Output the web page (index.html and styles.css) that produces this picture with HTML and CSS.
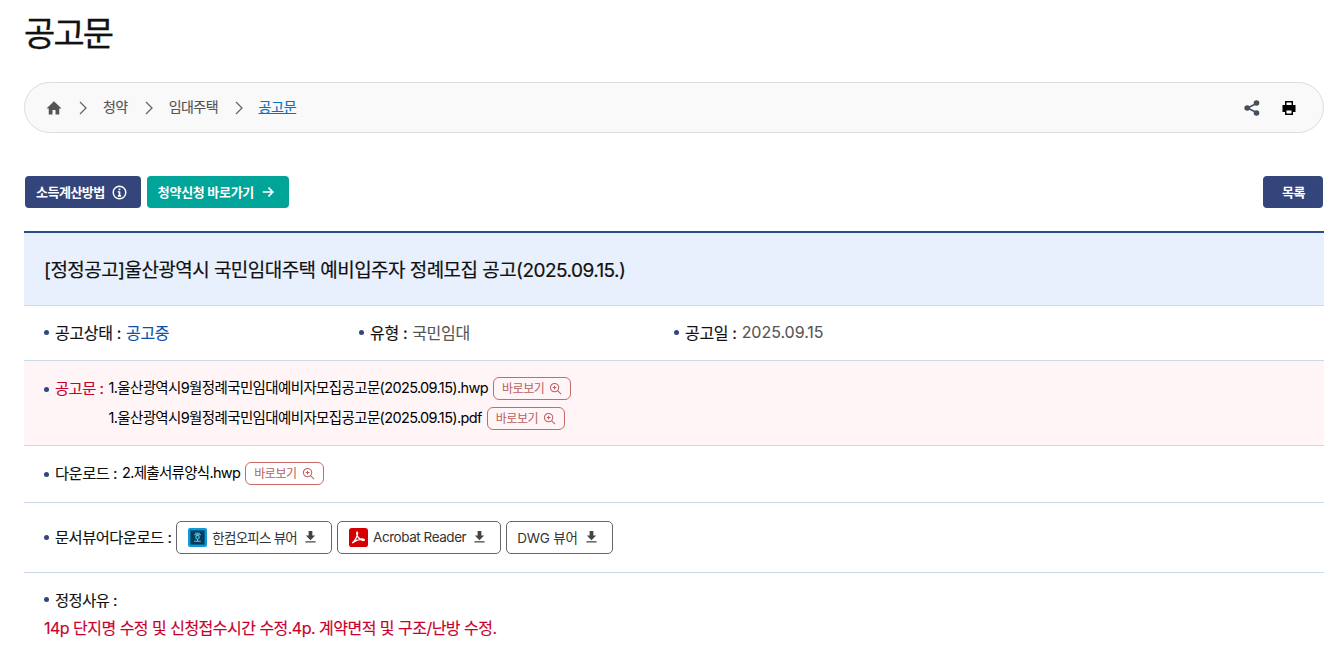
FILE: index.html
```html
<!DOCTYPE html>
<html lang="ko">
<head>
<meta charset="utf-8">
<title>공고문</title>
<link rel="stylesheet" href="styles.css">
</head>
<body>
<main class="page">
  <h1 class="title">공고문</h1>
  <nav class="crumbs">
    <svg class="home" viewBox="0 0 24 24"><path d="M10 20.500v-6h4v6h5v-8h3L12 3 2 12.500h3v8z"/></svg>
    <svg class="chev" viewBox="0 0 10 16"><path d="M2 2l6 6-6 6"/></svg>
    <span class="crumb">청약</span>
    <svg class="chev" viewBox="0 0 10 16"><path d="M2 2l6 6-6 6"/></svg>
    <span class="crumb">임대주택</span>
    <svg class="chev" viewBox="0 0 10 16"><path d="M2 2l6 6-6 6"/></svg>
    <a class="crumb current" href="#">공고문</a>
    <span class="crumb-tools">
      <svg class="share" viewBox="0 0 16 16"><path class="share-l" d="M12.500 3.500L3.500 8l9 4.500"/><circle cx="12.500" cy="3" r="2.800"/><circle cx="3.200" cy="8" r="2.800"/><circle cx="12.500" cy="13" r="2.800"/></svg>
      <svg class="print" viewBox="0 0 16 16"><path d="M4 1h8v4h2.500v7H12v3H4v-3H1.500V5H4z"/><path class="print-w" d="M5.500 2.500h5V5h-5zM5.500 10.500h5v3h-5z"/></svg>
    </span>
  </nav>
  <div class="actions">
    <a class="btn navy" href="#">소득계산방법
      <svg class="ico" viewBox="0 0 16 16"><circle cx="8" cy="8" r="6.700"/><path class="ico-i" d="M8 7.200v4.300M6.300 7.200H8M6.300 11.500h3.400M8 3.800v1.800"/></svg>
    </a>
    <a class="btn teal" href="#">청약신청 바로가기
      <svg class="ico arrow" viewBox="0 0 16 16"><path d="M2 8h11.500M8.500 3l5 5-5 5"/></svg>
    </a>
    <a class="btn navy list" href="#">목록</a>
  </div>
  <section class="board">
    <h2 class="board-title">[정정공고]울산광역시 국민임대주택 예비입주자 정례모집 공고(2025.09.15.)</h2>
    <div class="row meta">
      <div class="meta-item"><span class="dot"></span><b class="label">공고상태 :</b> <span class="blue">공고중</span></div>
      <div class="meta-item"><span class="dot"></span><b class="label">유형 :</b> <span class="muted">국민임대</span></div>
      <div class="meta-item"><span class="dot"></span><b class="label">공고일 :</b> <span class="muted date">2025.09.15</span></div>
    </div>
    <div class="row notice">
      <span class="dot"></span><b class="label red lab-notice">공고문 :</b>
      <div class="files">
        <div class="file">1.울산광역시9월정례국민임대예비자모집공고문(2025.09.15).hwp <a class="view" href="#">바로보기<svg class="zoom" viewBox="0 0 14 14"><circle cx="6" cy="6" r="4.500"/><path d="M9.500 9.500L13 13M6 4v4M4 6h4"/></svg></a></div>
        <div class="file">1.울산광역시9월정례국민임대예비자모집공고문(2025.09.15).pdf <a class="view" href="#">바로보기<svg class="zoom" viewBox="0 0 14 14"><circle cx="6" cy="6" r="4.500"/><path d="M9.500 9.500L13 13M6 4v4M4 6h4"/></svg></a></div>
      </div>
    </div>
    <div class="row download">
      <span class="dot"></span><b class="label">다운로드 :</b>
      <span class="file">2.제출서류양식.hwp <a class="view" href="#">바로보기<svg class="zoom" viewBox="0 0 14 14"><circle cx="6" cy="6" r="4.500"/><path d="M9.500 9.500L13 13M6 4v4M4 6h4"/></svg></a></span>
    </div>
    <div class="row viewers">
      <span class="dot"></span><b class="label">문서뷰어다운로드 :</b>
      <a class="viewer viewer-ko" href="#">
        <svg class="logo" viewBox="0 0 20 20"><rect width="20" height="20" rx="2" fill="#0a9bdc"/><rect x="2.500" y="2.500" width="15" height="15" fill="#0a3d5c"/><path class="hcell" d="M7.500 5.500h5M6.500 7h7M10 8a1.800 1.800 0 1 0 .01 0M10 11.500v2M6.500 14h7"/></svg>
        한컴오피스 뷰어<svg class="dl" viewBox="0 0 14 14"><path d="M5 1h4v5h3L7 11 2 6h3zM1.500 12h11v1.500h-11z"/></svg>
      </a>
      <a class="viewer viewer-en" href="#">
        <svg class="logo" viewBox="0 0 20 20"><rect width="20" height="20" rx="3" fill="#d40000"/><path class="acro" d="M3.500 15.500c2-1 4-4 5.500-9 .3-1.500-.2-2.500-.7-2-.5.800 0 3 1.500 5.500 1.500 2 4 3.500 6 3 1-.5 0-1.500-2-1.400-3 .2-7 1.500-10 3.900z"/></svg>
        Acrobat Reader<svg class="dl" viewBox="0 0 14 14"><path d="M5 1h4v5h3L7 11 2 6h3zM1.500 12h11v1.500h-11z"/></svg>
      </a>
      <a class="viewer viewer-dwg" href="#">DWG 뷰어<svg class="dl" viewBox="0 0 14 14"><path d="M5 1h4v5h3L7 11 2 6h3zM1.500 12h11v1.500h-11z"/></svg></a>
    </div>
    <div class="reason">
      <div class="reason-head"><span class="dot"></span><b class="label">정정사유 :</b></div>
      <p class="reason-text">14p 단지명 수정 및 신청접수시간 수정.4p. 계약면적 및 구조/난방 수정.</p>
    </div>
  </section>
</main>
</body>
</html>
```
FILE: styles.css
```css
* { box-sizing: border-box; }
html, body { margin: 0; padding: 0; background: #fff; }
body {
  font-family: Inter, "Noto Sans CJK KR", sans-serif;
  color: #111;
  letter-spacing: -0.5px;
  overflow: hidden;
  height: 672px;
}
a { text-decoration: none; color: inherit; }
.page { padding: 0 12px 0 24px; }
.title {
  margin: 0 0 -1px;
  font-size: 34px;
  font-weight: 400;
  line-height: 38px;
  padding-top: 15px;
  letter-spacing: -1.900px;
  -webkit-text-stroke: 0.300px #111;
}
.crumbs {
  margin-top: 30px;
  height: 51px;
  border: 1px solid #ddd;
  border-radius: 26px;
  background: #f9f9f9;
  display: flex;
  align-items: center;
  padding: 0 20px;
  color: #555;
  font-size: 14px;
}
.home { width: 18px; height: 18px; fill: #555; margin-right: 15px; }
.chev { width: 10px; height: 16px; fill: none; stroke: #666; stroke-width: 1.300; margin-right: 15px; }
.crumb { margin-right: 16px; margin-bottom: 4px; letter-spacing: -0.550px; -webkit-text-stroke: 0.150px; }
.current { color: #0075c9; text-decoration: underline; letter-spacing: -0.300px; margin-left: -0.500px; }
.crumb-tools { margin-left: auto; display: flex; align-items: center; gap: 21px; padding-right: 6px; }
.share { width: 16px; height: 16px; fill: #444f5c; }
.share-l { fill: none; stroke: #444f5c; stroke-width: 1.500; }
.print { width: 16px; height: 16px; fill: #000; }
.print-w { fill: #fff; }
.actions { margin-top: 43px; display: flex; gap: 6px; padding: 0 1px; }
.btn {
  height: 32px;
  padding: 0 14px 2px 11px;
  display: flex;
  align-items: center;
  gap: 7px;
  border-radius: 4px;
  color: #fff;
  font-size: 13px;
  font-weight: 700;
}
.navy { background: #34457c; }
.teal { background: #00a499; letter-spacing: -0.280px; }
.list { margin-left: auto; padding: 0 18px 2px 19px; }
.ico { width: 15px; height: 15px; fill: none; stroke: #fff; stroke-width: 1.500; margin-top: 2px; }
.ico-i { stroke-width: 1.800; }
.arrow { width: 14px; height: 14px; stroke-width: 1.900; }
.board { margin-top: 23px; border-top: 2px solid #2e4a8e; }
.board-title {
  margin: 0;
  background: #e8f0fd;
  height: 73px;
  display: flex;
  align-items: center;
  padding: 0 0 2px 20px;
  font-size: 19px;
  font-weight: 400;
  letter-spacing: -0.550px;
  -webkit-text-stroke: 0.200px #111;
  border-bottom: 1px solid #ccd9e8;
}
.row { border-bottom: 1px solid #ccd9e8; display: flex; align-items: center; padding-left: 20px; font-size: 15.300px; }
.dot { display: inline-block; width: 5px; height: 5px; border-radius: 50%; background: #34457c; margin-right: 6px; flex: none; }
.label { font-weight: 400; white-space: pre; -webkit-text-stroke: 0.150px; }
.red { color: #c8002d; }
.blue { color: #0a4fa8; margin-left: 5px; font-weight: 400; -webkit-text-stroke: 0.100px; }
.muted { color: #555; margin-left: 5px; font-weight: 400; -webkit-text-stroke: 0.100px; }
.date { letter-spacing: -0.030px; }
.meta { height: 55px; padding-bottom: 3px; font-size: 16px; letter-spacing: -0.330px; }
.meta .dot { margin-top: 2px; }
.meta-item { width: 315px; display: flex; align-items: center; }
.notice { background: #fff5f6; height: 85px; align-items: flex-start; padding-top: 16px; }
.notice .dot { margin-top: 10px; }
.lab-notice { margin: -1px 5px 0 0; }
.files { display: flex; flex-direction: column; gap: 7px; }
.file { font-size: 14.500px; letter-spacing: -0.640px; line-height: 21px; display: inline-flex; align-items: flex-start; gap: 5px; height: 23px; font-weight: 400; color: #000; }
.view {
  height: 23px;
  padding: 0 8px;
  border: 1px solid #c96a6a;
  border-radius: 6px;
  color: #b86060;
  font-size: 12px;
  letter-spacing: -0.400px;
  display: inline-flex;
  align-items: center;
  gap: 5px;
  background: #fff;
}
.notice .view { background: transparent; }
.zoom { width: 13px; height: 13px; fill: none; stroke: #b86060; stroke-width: 1.100; }
.download { height: 57px; padding-bottom: 2px; }
.download .dot { margin-top: 2px; }
.download .label { margin: 0 5px 2px 0; }
.download .file { letter-spacing: -0.700px; }
.viewers { height: 70px; }
.viewers .label { margin: 0 5px 3px 0; }
.viewer {
  height: 33px;
  border: 1px solid #666;
  border-radius: 5px;
  padding: 0 14px 2px 11px;
  display: inline-flex;
  align-items: center;
  margin-right: 5px;
  font-size: 13.500px;
  color: #333;
}
.viewer-ko { letter-spacing: -0.750px; }
.viewer-en { letter-spacing: -0.450px; }
.viewer-dwg { letter-spacing: -0.200px; padding-left: 10px; }
.logo { width: 19px; height: 19px; margin: 2px 5px 0 0; }
.hcell { fill: none; stroke: #5cc7ee; stroke-width: 1.100; }
.acro { fill: none; stroke: #fff; stroke-width: 1.400; }
.dl { width: 13px; height: 13px; fill: #444; margin-left: 7px; }
.reason { padding: 16px 0 0 20px; font-size: 15.300px; }
.reason-head { display: flex; align-items: center; height: 20px; }
.reason-text { margin: 6px 0 0; color: #c8002d; font-size: 16px; font-weight: 400; letter-spacing: -0.520px; -webkit-text-stroke: 0.150px; }
```
